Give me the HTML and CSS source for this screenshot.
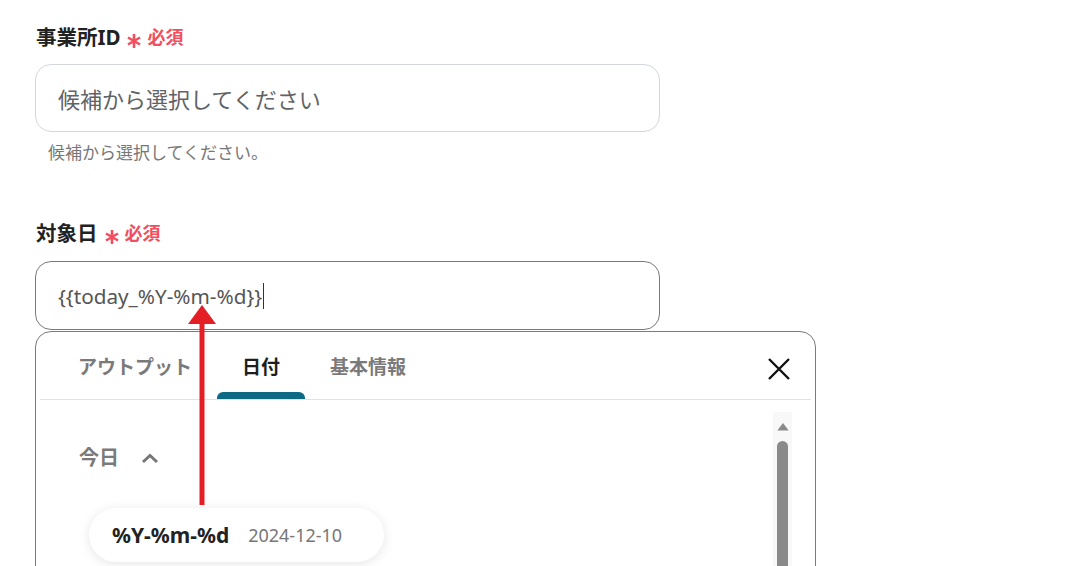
FILE: index.html
```html
<!DOCTYPE html>
<html lang="ja">
<head>
<meta charset="utf-8">
<link rel="stylesheet" href="styles.css">
</head>
<body>
<div class="page">
  <div class="field first">
    <div class="label">事業所ID<span class="req"><svg class="ast" width="16" height="16" viewBox="0 0 16 16"><path d="M8 1 V15 M2 4.5 L14 11.5 M14 4.5 L2 11.5" stroke="#f24e5e" stroke-width="2.6" fill="none"/></svg>必須</span></div>
    <div class="input placeholder">候補から選択してください</div>
    <div class="help">候補から選択してください。</div>
  </div>
  <div class="field second">
    <div class="label">対象日<span class="req"><svg class="ast" width="16" height="16" viewBox="0 0 16 16"><path d="M8 1 V15 M2 4.5 L14 11.5 M14 4.5 L2 11.5" stroke="#f24e5e" stroke-width="2.6" fill="none"/></svg>必須</span></div>
    <div class="input active"><span class="val">{{today_%Y-%m-%d}}</span><span class="caret"></span></div>
    <div class="panel">
      <div class="tabs">
        <div class="tab">アウトプット</div>
        <div class="tab on">日付</div>
        <div class="tab">基本情報</div>
        <svg class="close" width="22" height="22" viewBox="0 0 22 22"><path d="M1 1 L21 21 M21 1 L1 21" stroke="#111" stroke-width="2.4" fill="none"/></svg>
      </div>
      <div class="body">
        <div class="content">
          <div class="group">今日
            <svg class="chev" width="18" height="11" viewBox="0 0 18 11"><path d="M2 9 L9 2.5 L16 9" stroke="#777" stroke-width="3" fill="none"/></svg>
          </div>
          <div class="chip"><span class="fmt">%Y-%m-%d</span><span class="ex">2024-12-10</span></div>
        </div>
        <div class="scroll">
          <svg class="up" width="12" height="8" viewBox="0 0 12 8"><path d="M6 0 L12 8 L0 8 Z" fill="#8a8a8a"/></svg>
          <div class="thumb"></div>
        </div>
      </div>
    </div>
  </div>
  <svg class="arrow" width="40" height="220" viewBox="0 0 40 220">
    <line x1="20" y1="15" x2="20" y2="200" stroke="#e41e25" stroke-width="5"/>
    <path d="M20 0 L34 19 L6 19 Z" fill="#e41e25"/>
  </svg>
</div>
</body>
</html>
```

FILE: styles.css
```css
html, body {
  margin: 0;
  padding: 0;
  background: #fff;
  height: 566px;
  overflow: hidden;
}
body {
  font-family: "Noto Sans", "Noto Sans CJK JP", sans-serif;
}
.page {
  position: relative;
  padding: 24px 0 0 35px;
}
.label {
  font-size: 20.5px;
  font-weight: 700;
  color: #222;
  line-height: 26px;
  height: 26px;
  display: flex;
  align-items: center;
  padding-left: 1px;
}
.req {
  color: #f24e5e;
  font-size: 18px;
  font-weight: 700;
  margin-left: 6px;
  display: flex;
  align-items: center;
}
.ast {
  margin-right: 5px;
  position: relative;
  top: 4px;
}
.input {
  box-sizing: border-box;
  width: 625px;
  height: 68px;
  border: 1px solid #d3d7dd;
  border-radius: 16px;
  display: flex;
  align-items: center;
  padding-left: 22px;
  margin-top: 14px;
}
.placeholder {
  font-size: 22px;
  color: #5f6366;
}
.help {
  font-size: 17px;
  color: #777;
  line-height: 22px;
  margin-top: 10px;
  padding-left: 13px;
}
.second {
  margin-top: 56px;
}
.second .input {
  margin-top: 15px;
}
.active {
  border-color: #7a7a7a;
  height: 69px;
  font-size: 20.7px;
  color: #555;
}
.caret {
  display: inline-block;
  width: 1px;
  height: 26px;
  background: #333;
  margin-left: 1px;
}
.panel {
  box-sizing: border-box;
  width: 781px;
  height: 300px;
  margin-top: 1px;
  border: 1px solid #7a7a7a;
  border-radius: 16px 16px 0 0;
  background: #fff;
}
.tabs {
  position: relative;
  display: flex;
  margin: 0 4px;
  padding-left: 13px;
  height: 67px;
  border-bottom: 1px solid #e2e2e2;
}
.tab {
  font-size: 19px;
  font-weight: 700;
  color: #7a7a7a;
  padding: 0 25px;
  line-height: 70px;
  height: 67px;
  position: relative;
}
.tab.on {
  color: #1e1e1e;
}
.tab.on::after {
  content: "";
  position: absolute;
  left: 0;
  right: 0;
  bottom: 0;
  height: 7px;
  background: #0e6a84;
  border-radius: 6px 6px 0 0;
}
.close {
  position: absolute;
  right: 21px;
  top: 26px;
}
.body {
  display: flex;
  justify-content: space-between;
  padding-top: 12px;
}
.content {
  padding-left: 43px;
  padding-top: 34px;
}
.group {
  font-size: 20px;
  font-weight: 700;
  color: #7a7a7a;
  display: flex;
  align-items: center;
  line-height: 24px;
}
.chev {
  margin-left: 22px;
}
.chip {
  margin-top: 38px;
  margin-left: 10px;
  width: 295px;
  height: 54px;
  box-sizing: border-box;
  border-radius: 27px;
  background: #fff;
  box-shadow: 0 2px 12px rgba(0, 0, 0, 0.10);
  display: flex;
  align-items: center;
  padding-left: 23px;
}
.fmt {
  font-size: 21px;
  font-weight: 700;
  color: #222;
}
.ex {
  font-size: 18px;
  color: #777;
  margin-left: 19px;
}
.scroll {
  width: 19px;
  height: 200px;
  background: #f8f8f8;
  margin-right: 23px;
  display: flex;
  flex-direction: column;
  align-items: center;
}
.up {
  margin-top: 11px;
}
.thumb {
  margin-top: 10px;
  width: 11px;
  height: 180px;
  background: #8a8a8a;
  border-radius: 6px 6px 0 0;
}
.arrow {
  position: absolute;
  left: 182px;
  top: 305px;
}
```
